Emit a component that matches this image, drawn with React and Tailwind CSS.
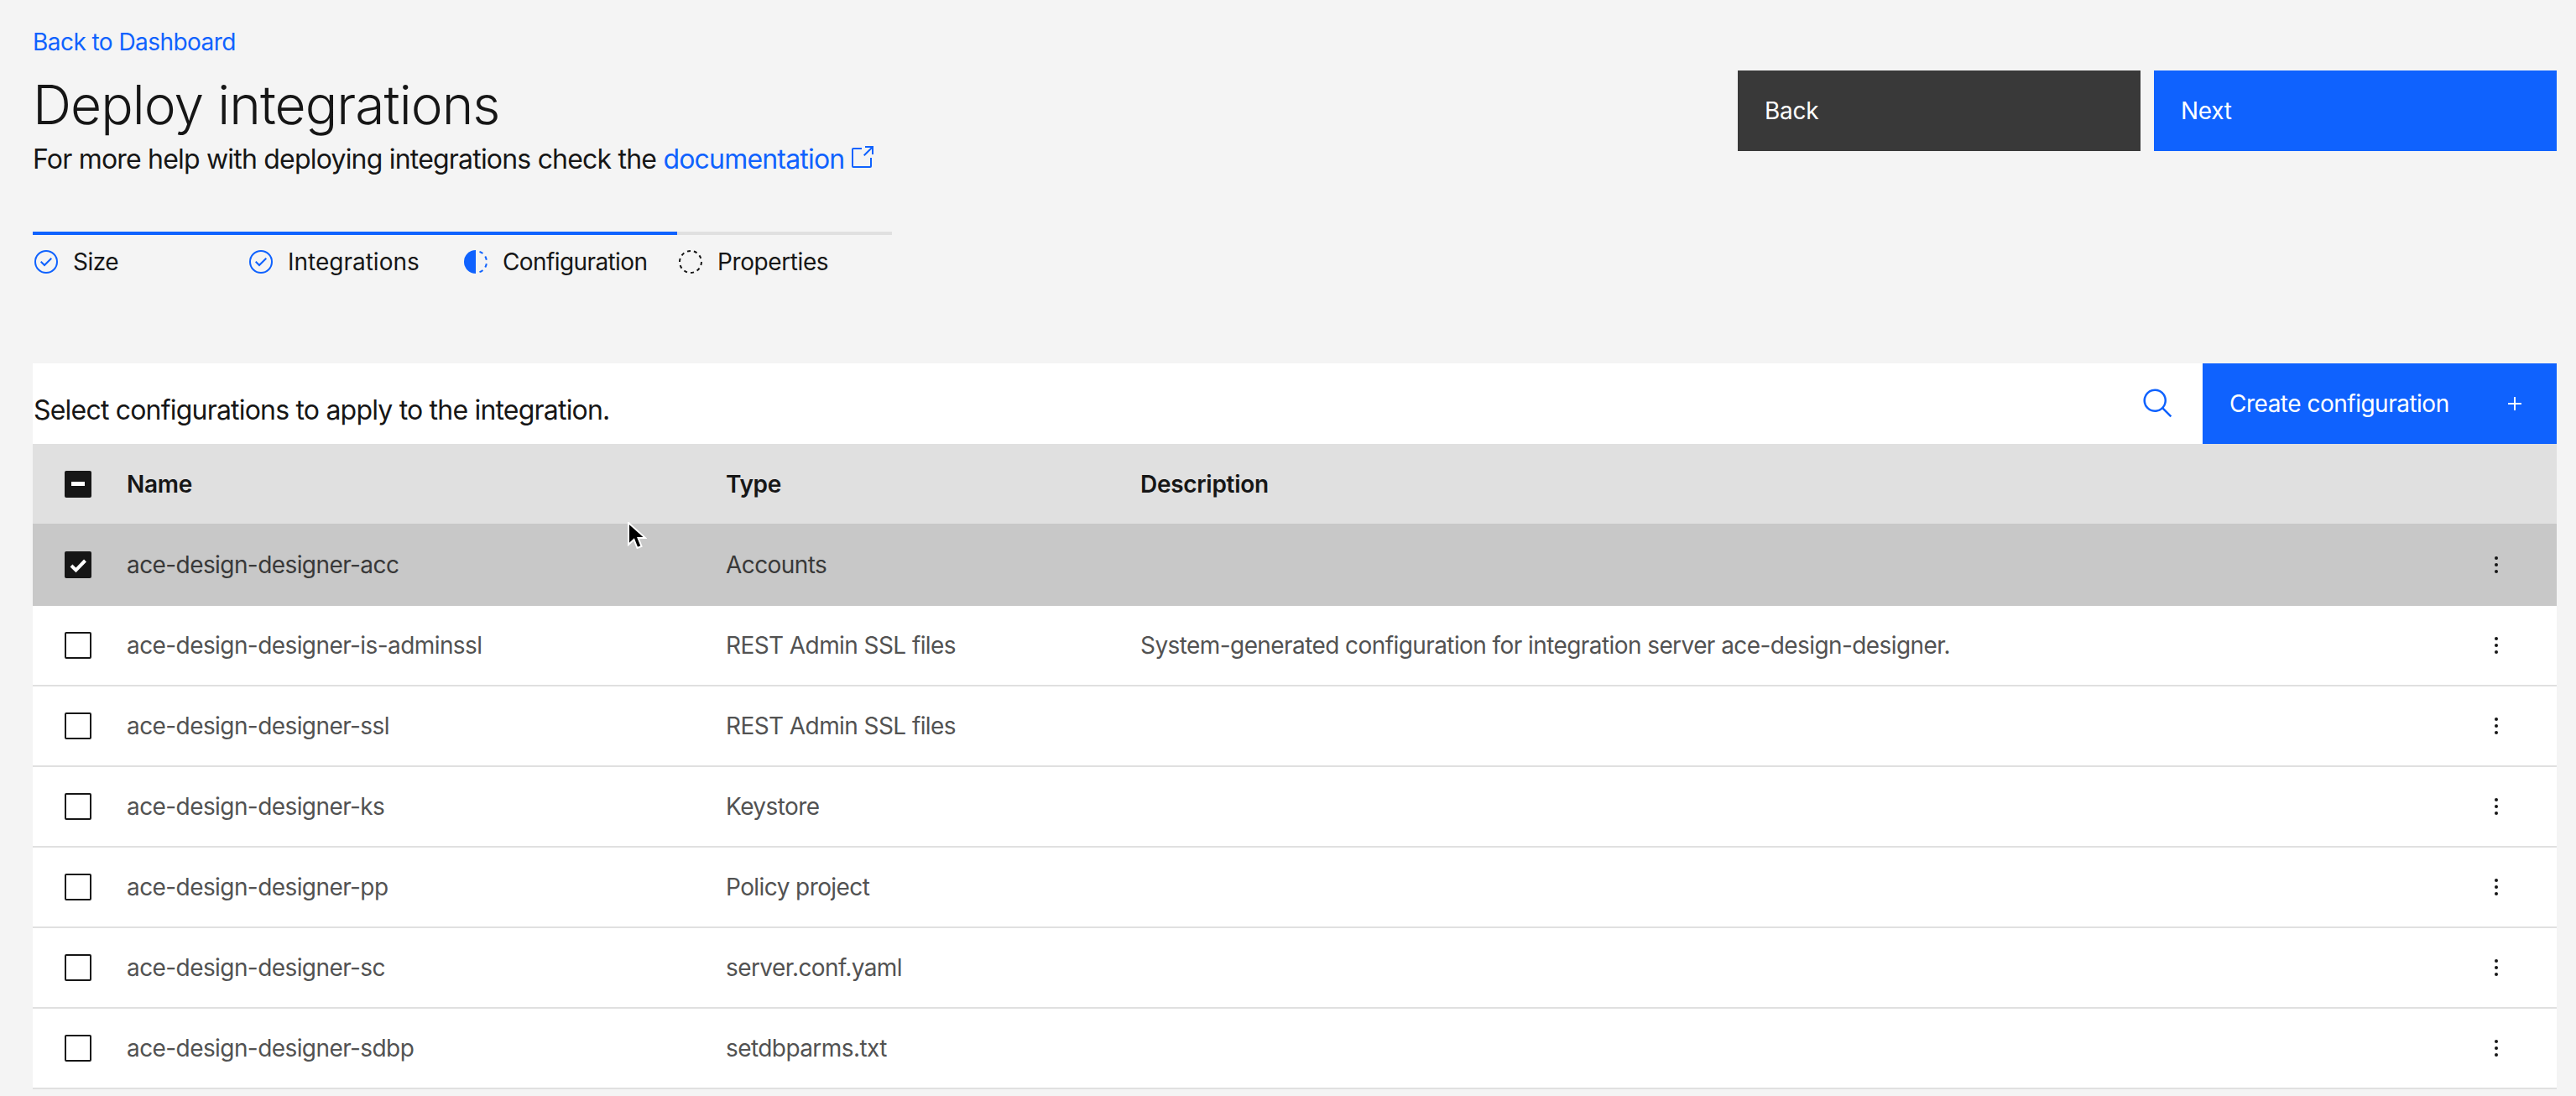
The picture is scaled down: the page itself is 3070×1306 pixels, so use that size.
import React from 'react';

const configs = [
  { name: 'ace-design-designer-acc', type: 'Accounts', selected: true },
  {
    name: 'ace-design-designer-is-adminssl',
    type: 'REST Admin SSL files',
    description: 'System-generated configuration for integration server ace-design-designer.',
  },
  { name: 'ace-design-designer-ssl', type: 'REST Admin SSL files' },
  { name: 'ace-design-designer-ks', type: 'Keystore' },
  { name: 'ace-design-designer-pp', type: 'Policy project' },
  { name: 'ace-design-designer-sc', type: 'server.conf.yaml' },
  { name: 'ace-design-designer-sdbp', type: 'setdbparms.txt' },
];

const CheckOutline = () => (
  <svg viewBox="0 0 32 32" className="w-8 h-8 fill-[#0f62fe] shrink-0">
    <path d="M14 21.414l-5-5.001L10.413 15 14 18.586 21.585 11 23 12.415l-9 8.999z" />
    <path d="M16 2a14 14 0 1 0 14 14A14 14 0 0 0 16 2zm0 26a12 12 0 1 1 12-12 12 12 0 0 1-12 12z" />
  </svg>
);

const Incomplete = () => (
  <svg viewBox="0 0 32 32" className="w-8 h-8 fill-[#0f62fe] shrink-0">
    <path d="M23.7642 6.8593l1.2851-1.5315A13.976 13.976 0 0 0 20.8672 2.887l-.6836 1.8776A11.9729 11.9729 0 0 1 23.7642 6.8593z" />
    <path d="M27.81 14l1.9677-.4128A13.8888 13.8888 0 0 0 28.14 9.0457L26.4087 10A12.52 12.52 0 0 1 27.81 14z" />
    <path d="M20.1836 27.2354l.6836 1.8776a13.976 13.976 0 0 0 4.1821-2.4408l-1.2851-1.5315A11.9729 11.9729 0 0 1 20.1836 27.2354z" />
    <path d="M26.4087 22L28.14 23a14.14 14.14 0 0 0 1.6382-4.5872L27.81 18.0659A12.1519 12.1519 0 0 1 26.4087 22z" />
    <path d="M16 30V2a14 14 0 0 0 0 28z" />
  </svg>
);

const CircleDash = () => (
  <svg viewBox="0 0 32 32" className="w-8 h-8 fill-[#161616] shrink-0">
    <path d="M7.7 4.7a14.7 14.7 0 0 0-3 3.1L6.3 9a13.26 13.26 0 0 1 2.6-2.7z" />
    <path d="M4.6 12.3l-1.9-.6A12.51 12.51 0 0 0 2 16h2a11.48 11.48 0 0 1 .6-3.7z" />
    <path d="M2.7 20.4a14.4 14.4 0 0 0 2 3.9l1.6-1.2a12.89 12.89 0 0 1-1.7-3.3z" />
    <path d="M7.8 27.3a14.4 14.4 0 0 0 3.9 2l.6-1.9A12.89 12.89 0 0 1 9 25.7z" />
    <path d="M11.7 2.7l.6 1.9A11.48 11.48 0 0 1 16 4V2a12.51 12.51 0 0 0-4.3.7z" />
    <path d="M24.2 27.3a15.18 15.18 0 0 0 3.1-3.1L25.7 23A11.53 11.53 0 0 1 23 25.7z" />
    <path d="M27.4 19.7l1.9.6A15.47 15.47 0 0 0 30 16H28a11.48 11.48 0 0 1-.6 3.7z" />
    <path d="M29.2 11.6a14.4 14.4 0 0 0-2-3.9L25.6 8.9a12.89 12.89 0 0 1 1.7 3.3z" />
    <path d="M24.1 4.6a14.4 14.4 0 0 0-3.9-2l-.6 1.9a12.89 12.89 0 0 1 3.3 1.7z" />
    <path d="M20.3 29.3l-.6-1.9A11.48 11.48 0 0 1 16 28v2a21.42 21.42 0 0 0 4.3-.7z" />
  </svg>
);

const steps = [
  { label: 'Size', icon: <CheckOutline />, tracking: 'tracking-[-0.5px]' },
  { label: 'Integrations', icon: <CheckOutline />, tracking: 'tracking-normal' },
  { label: 'Configuration', icon: <Incomplete />, tracking: 'tracking-[-0.6px]' },
  { label: 'Properties', icon: <CircleDash />, tracking: 'tracking-[-0.4px]' },
];

const Checkbox = ({ state }) => {
  if (state === 'mixed') {
    return (
      <span className="w-8 h-8 rounded-[2px] bg-[#161616] flex items-center justify-center shrink-0">
        <span className="w-4 h-[5px] bg-white" />
      </span>
    );
  }
  if (state === 'checked') {
    return (
      <span className="w-8 h-8 rounded-[2px] bg-[#161616] flex items-center justify-center shrink-0">
        <svg viewBox="0 0 32 32" className="w-8 h-8">
          <path d="M8 17l5.500 5.500L24.500 11" fill="none" stroke="#fff" strokeWidth="4" />
        </svg>
      </span>
    );
  }
  return <span className="w-8 h-8 rounded-[2px] border-2 border-[#161616] shrink-0" />;
};

const OverflowMenu = () => (
  <svg viewBox="0 0 32 32" className="w-8 h-8 fill-[#161616]">
    <circle cx="16" cy="8" r="2" />
    <circle cx="16" cy="16" r="2" />
    <circle cx="16" cy="24" r="2" />
  </svg>
);

export default function App() {
  return (
    <div className="relative min-h-screen bg-[#f4f4f4] pl-[39px] pr-[23px] pt-8 text-[#161616] font-['Inter',sans-serif]">
      {/* Page header */}
      <div className="flex justify-between items-start">
        <div>
          <a className="block text-[28px] leading-9 tracking-[-0.55px] text-[#0f62fe]">Back to Dashboard</a>
          <h1 className="mt-[19px] text-[64px] leading-[76px] font-light tracking-[-0.95px]">Deploy integrations</h1>
          <p className="mt-[5px] text-[32px] leading-[44px] tracking-[-0.8px] flex items-center">
            For more help with deploying integrations check the&nbsp;
            <span className="text-[#0f62fe]">documentation</span>
            <svg viewBox="0 0 32 32" className="w-8 h-8 fill-[#0f62fe] ml-[5px] mb-1">
              <path d="M26 28H6a2 2 0 0 1-2-2V6a2 2 0 0 1 2-2h10v2H6v20h20V16h2v10a2 2 0 0 1-2 2z" />
              <path d="M20 2v2h6.586L18 12.586 19.414 14 28 5.414V12h2V2H20z" />
            </svg>
          </p>
        </div>
        <div className="flex gap-4 pt-[52px]">
          <button className="w-[480px] h-24 bg-[#393939] text-white text-[28px] text-left pl-8 tracking-[-0.3px]">Back</button>
          <button className="w-[480px] h-24 bg-[#0f62fe] text-white text-[28px] text-left pl-8 tracking-[-0.3px]">Next</button>
        </div>
      </div>

      {/* Progress steps */}
      <div className="flex mt-[64px]">
        {steps.map((step, i) => (
          <div key={step.label} className={`w-64 border-t-4 ${i < 3 ? 'border-[#0f62fe]' : 'border-[#e0e0e0]'}`}>
            <div className={`flex items-center gap-4 mt-4 text-[28px] leading-8 ${step.tracking}`}>
              {step.icon}
              <span>{step.label}</span>
            </div>
          </div>
        ))}
      </div>

      {/* Toolbar */}
      <div className="mt-[105px] h-24 bg-white flex items-center">
        <span className="flex-1 text-[32px] pt-4 pl-px tracking-[-0.8px]">Select configurations to apply to the integration.</span>
        <svg viewBox="0 0 32 32" className="w-10 h-10 fill-[#0f62fe] mr-[33px]">
          <path d="M29 27.5859l-7.5521-7.5521a11.0177 11.0177 0 1 0-1.4141 1.4141L27.5859 29zM4 13a9 9 0 1 1 9 9 9.01 9.01 0 0 1-9-9z" />
        </svg>
        <button className="w-[422px] h-24 bg-[#0f62fe] text-white text-[28px] tracking-[-0.5px] flex items-center justify-between pl-8 pr-[34px]">
          <span>Create configuration</span>
          <svg viewBox="0 0 32 32" className="w-8 h-8 fill-white">
            <path d="M17 15V8h-2v7H8v2h7v7h2v-7h7v-2h-7z" />
          </svg>
        </button>
      </div>

      {/* Table */}
      <div className="h-[95px] bg-[#e0e0e0] flex items-center text-[28px] font-semibold tracking-[-0.3px]">
        <div className="w-28 pl-[38px] flex">
          <Checkbox state="mixed" />
        </div>
        <div className="w-[714px]">Name</div>
        <div className="w-[494px]">Type</div>
        <div>Description</div>
      </div>
      {configs.map((c) => (
        <div
          key={c.name}
          className={`flex items-center text-[28px] tracking-[-0.58px] ${
            c.selected
              ? 'h-[98px] bg-[#c8c8c8] text-[#393939]'
              : 'h-24 bg-white text-[#525252] border-b-2 border-[#e0e0e0]'
          }`}
        >
          <div className="w-28 pl-[38px] flex">
            <Checkbox state={c.selected ? 'checked' : undefined} />
          </div>
          <div className="w-[714px]">{c.name}</div>
          <div className="w-[494px]">{c.type}</div>
          <div className="flex-1">{c.description}</div>
          <div className="w-[88px] flex">
            <OverflowMenu />
          </div>
        </div>
      ))}

      {/* Mouse pointer */}
      <svg viewBox="0 0 24 36" className="absolute left-[747px] top-[622px] w-6 h-9">
        <path d="M2 1v26l6.5-6 4 10 5-2-4-10h8.500z" fill="#000" stroke="#fff" strokeWidth="2" />
      </svg>
    </div>
  );
}
